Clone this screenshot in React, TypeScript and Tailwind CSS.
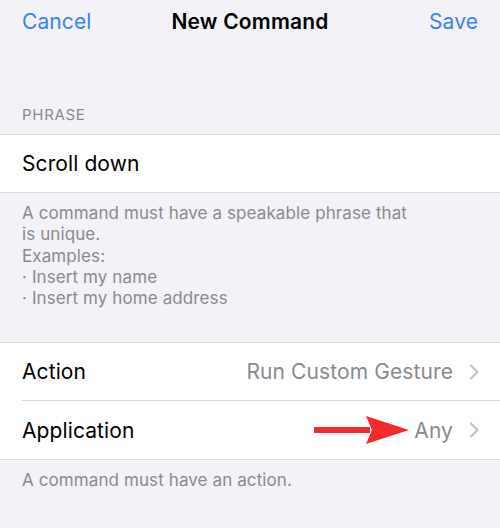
const Chevron = () => (
  <svg width="10" height="16" viewBox="0 0 10 16" className="ml-[16px]">
    <polyline points="2,1.5 8.5,8 2,14.5" fill="none" stroke="#c4c4c7" strokeWidth="2.2" strokeLinecap="round" strokeLinejoin="round" />
  </svg>
);

const Row = ({ label, value, arrow, divider }: { label: string; value: string; arrow?: boolean; divider?: boolean }) => {
  return (
    <div className="flex h-[58px] items-center pl-[22px]">
      <div className={`flex h-full flex-1 items-center pr-[21px] ${divider ? "border-b border-[#d8d8dc]" : ""}`}>
        <p className="flex-1 text-[21px] tracking-[0.1px] text-black">{label}</p>
        {arrow && (
          <svg width="96" height="30" viewBox="0 0 96 30" className="mr-[4px]">
            <rect x="0" y="12" width="56" height="6" fill="#f42b2b" />
            <polygon points="52,1 95,15 52,29 58,15" fill="#f42b2b" />
          </svg>
        )}
        <p className="text-[21px] tracking-[0.1px] text-[#8a8a8e]">{value}</p>
        <Chevron />
      </div>
    </div>
  );
};

const App = () => {
  return (
    <div
      className="flex h-[528px] w-[500px] flex-col bg-[#f2f2f7]"
      style={{ fontFamily: "Inter, 'Liberation Sans', sans-serif" }}
    >
      <div className="grid h-[44px] grid-cols-[1fr_auto_1fr] items-center px-[22px] text-[21px] tracking-[0.1px]">
        <p className="text-[#3a82f7]">Cancel</p>
        <p className="font-semibold tracking-[0.2px] text-black">New Command</p>
        <p className="text-right text-[#3a82f7]">Save</p>
      </div>

      <div className="flex h-[90px] items-end px-[22px] pb-[9px]">
        <p className="text-[15px] leading-[20px] tracking-[0.7px] text-[#8a8a8e]">PHRASE</p>
      </div>

      <div className="flex h-[59px] items-center border-y border-[#d8d8dc] bg-white px-[22px]">
        <p className="text-[21px] tracking-[0.1px] text-black">Scroll down</p>
      </div>

      <div className="px-[22px] pt-[10px] pb-[33px] text-[17px] leading-[21.3px] tracking-[0.1px] text-[#8a8a8e]">
        <p className="w-[390px]">A command must have a speakable phrase that is unique.</p>
        <p>Examples:</p>
        <p>· Insert my name</p>
        <p>· Insert my home address</p>
      </div>

      <div className="border-y border-[#d8d8dc] bg-white">
        <Row label="Action" value="Run Custom Gesture" divider />
        <Row label="Application" value="Any" arrow />
      </div>

      <p className="px-[22px] pt-[10px] text-[17px] leading-[21px] tracking-[0.1px] text-[#8a8a8e]">A command must have an action.</p>
    </div>
  );
};

export default App;
